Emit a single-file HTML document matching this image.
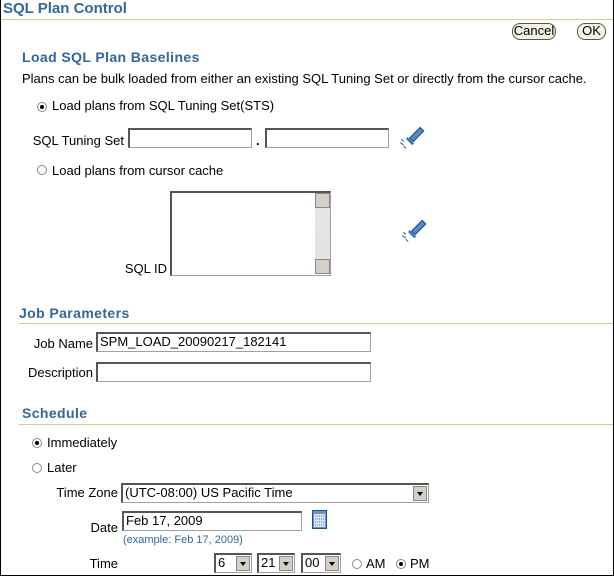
<!DOCTYPE html>
<html><head><style>
body{margin:0;width:614px;height:576px;position:relative;background:#fff;font-family:"Liberation Sans",sans-serif;font-size:13px;color:#000;overflow:hidden}
.a{position:absolute;white-space:nowrap}
.r{position:absolute;white-space:nowrap;text-align:right}
.frame{position:absolute;left:0;top:0;width:612px;height:575px;border:1px solid #000;border-top:none}
.h{color:#336699;font-weight:bold;font-size:14px;letter-spacing:0.4px}
.line{position:absolute;height:1px;background:#cccc99}
.inp{position:absolute;background:#fff;border:1px solid #a0a0a0;border-top:2px solid #555;border-left:2px solid #555;box-sizing:border-box;height:20px;font-size:13px;padding:0 2px;line-height:16px}
.btn{position:absolute;background:#f4f3e3;border:1px solid #555;border-radius:8px;height:15px;font-size:13px;line-height:14px;text-align:center}
.rad{position:absolute;width:10px;height:10px;border-radius:50%;border:1px solid #888;background:#fff;box-sizing:border-box}
.rad.on::after{content:"";position:absolute;left:2px;top:2px;width:4px;height:4px;border-radius:50%;background:#000}
.sel{position:absolute;height:20px;box-sizing:border-box;border:1px solid #a0a0a0;border-top:2px solid #555;border-left:2px solid #555;background:#fff;font-size:13px;line-height:16px;padding-left:2px}
.arr{position:absolute;right:1px;top:1px;width:14px;height:15px;background:#d4d0c8;border:1px solid #888;box-sizing:border-box}
.arr::after{content:"";position:absolute;left:3px;top:5px;border-left:3px solid transparent;border-right:3px solid transparent;border-top:4px solid #000}
</style></head><body>
<div class="frame"></div>
<div class="a" style="left:3px;top:0px;color:#336699;font-size:15px;font-weight:bold">SQL Plan Control</div>
<div class="line" style="left:1px;top:19px;width:612px"></div>
<div class="btn" style="left:512px;top:23px;width:42px">Cancel</div>
<div class="btn" style="left:577px;top:23px;width:27px">OK</div>
<div class="a h" style="left:22px;top:49px">Load SQL Plan Baselines</div>
<div class="a" style="left:22px;top:71px">Plans can be bulk loaded from either an existing SQL Tuning Set or directly from the cursor cache.</div>
<div class="rad on" style="left:37px;top:102px"></div>
<div class="a" style="left:52px;top:98px">Load plans from SQL Tuning Set(STS)</div>
<div class="r" style="right:490px;top:133px">SQL Tuning Set</div>
<div class="inp" style="left:128px;top:128px;width:124px"></div>
<div class="a" style="left:256px;top:133px;font-weight:bold">.</div>
<div class="inp" style="left:265px;top:128px;width:124px"></div>
<svg class="a" style="left:398px;top:124px" width="28" height="28" viewBox="0 0 24 24"><path d="M10 12 L19 3 L22 6 L13 15 Z" fill="#5a8ac6" stroke="#1d4f91" stroke-width="1"/><path d="M8 11 L14 17 L12 18 L7 13 Z" fill="#3a6fb0"/><path d="M3 13 L5 15 M2 16 L5 18 M5 19 L7 21" stroke="#3a6fb0" stroke-width="1"/></svg>
<div class="rad" style="left:37px;top:165px"></div>
<div class="a" style="left:52px;top:163px">Load plans from cursor cache</div>
<div class="inp" style="left:170px;top:191px;width:161px;height:85px;padding:0"><div style="position:absolute;right:0;top:0;width:15px;height:81px;background:repeating-linear-gradient(45deg,#d8d8d8 0 1px,#f0f0f0 1px 2px)"><div style="height:15px;background:#d4d0c8;border:1px solid #888;box-sizing:border-box"></div><div style="position:absolute;bottom:0;width:15px;height:15px;background:#d4d0c8;border:1px solid #888;box-sizing:border-box"></div></div></div>
<svg class="a" style="left:400px;top:217px" width="28" height="28" viewBox="0 0 24 24"><path d="M10 12 L19 3 L22 6 L13 15 Z" fill="#5a8ac6" stroke="#1d4f91" stroke-width="1"/><path d="M8 11 L14 17 L12 18 L7 13 Z" fill="#3a6fb0"/><path d="M3 13 L5 15 M2 16 L5 18 M5 19 L7 21" stroke="#3a6fb0" stroke-width="1"/></svg>
<div class="r" style="right:447px;top:261px">SQL ID</div>
<div class="a h" style="left:19px;top:305px">Job Parameters</div>
<div class="line" style="left:19px;top:323px;width:594px"></div>
<div class="r" style="right:521px;top:336px">Job Name</div>
<div class="inp" style="left:96px;top:332px;width:275px">SPM_LOAD_20090217_182141</div>
<div class="r" style="right:521px;top:365px">Description</div>
<div class="inp" style="left:96px;top:362px;width:275px"></div>
<div class="a h" style="left:22px;top:405px">Schedule</div>
<div class="line" style="left:19px;top:424px;width:594px"></div>
<div class="rad on" style="left:32px;top:438px"></div>
<div class="a" style="left:47px;top:435px">Immediately</div>
<div class="rad" style="left:32px;top:463px"></div>
<div class="a" style="left:47px;top:460px">Later</div>
<div class="r" style="right:496px;top:485px">Time Zone</div>
<div class="sel" style="left:121px;top:483px;width:308px">(UTC-08:00) US Pacific Time<div class="arr"></div></div>
<div class="r" style="right:496px;top:520px">Date</div>
<div class="inp" style="left:122px;top:511px;width:180px">Feb 17, 2009</div>
<svg class="a" style="left:312px;top:510px" width="16" height="20" viewBox="0 0 16 20"><rect x="0.5" y="0.5" width="14" height="18" fill="#6b94c9" stroke="#1d4f91"/><rect x="2" y="4" width="11" height="13" fill="#dfe8f5"/><path d="M3 6h9M3 9h9M3 12h9M3 15h9" stroke="#3a6fb0" stroke-dasharray="1 1"/></svg>
<div class="a" style="left:123px;top:534px;font-size:11px;color:#336699">(example: Feb 17, 2009)</div>
<div class="r" style="right:496px;top:556px">Time</div>
<div class="sel" style="left:214px;top:553px;width:38px">6<div class="arr"></div></div>
<div class="sel" style="left:257px;top:553px;width:38px">21<div class="arr"></div></div>
<div class="sel" style="left:301px;top:553px;width:40px">00<div class="arr"></div></div>
<div class="rad" style="left:352px;top:559px"></div>
<div class="a" style="left:366px;top:556px">AM</div>
<div class="rad on" style="left:396px;top:559px"></div>
<div class="a" style="left:410px;top:556px">PM</div>
</body></html>
